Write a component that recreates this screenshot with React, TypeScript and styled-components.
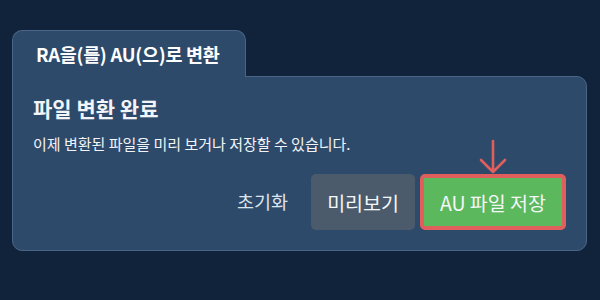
import React from 'react'
import styled, { createGlobalStyle } from 'styled-components'

// ================================================================================================

const GlobalStyle = createGlobalStyle`
  html, body {
    margin: 0;
    padding: 0;
    background: #10233a;
  }

  body {
    font-family: 'Noto Sans CJK KR', 'Noto Sans', sans-serif;
    color: #ffffff;
  }
`

// ================================================================================================

const Page = styled.div`
  width: 600px;
  height: 300px;
  box-sizing: border-box;
  padding: 30px 13px 0 12px;
  display: flex;
  flex-direction: column;
`

const Tab = styled.div`
  align-self: flex-start;
  position: relative;
  z-index: 1;
  box-sizing: border-box;
  width: 234px;
  height: 47px;
  margin-bottom: -1px;
  padding: 0 0 1px 23px;
  display: flex;
  align-items: center;

  background: #2d4a6b;
  border: 1px solid #4b6588;
  border-bottom: none;
  border-radius: 10px 10px 0 0;

  font-size: 18.5px;
  font-weight: 700;
  letter-spacing: -0.3px;
`

const Panel = styled.div`
  box-sizing: border-box;
  height: 175px;
  padding: 15px 20px 20px 20px;
  display: flex;
  flex-direction: column;

  background: #2d4a6b;
  border: 1px solid #4b6588;
  border-radius: 0 10px 10px 10px;
`

const Heading = styled.h2`
  margin: 0;
  font-size: 21px;
  line-height: 32px;
  font-weight: 700;
  color: #f2f4f7;
`

const Description = styled.p`
  margin: 9px 0 0 0;
  font-size: 15px;
  line-height: 22px;
  color: #f2f4f7;
`

const Actions = styled.div`
  margin-top: auto;
  display: flex;
  justify-content: flex-end;
  align-items: center;
  gap: 5px;
`

const TextButton = styled.button`
  margin-right: 18px;
  padding: 0 0 2px 0;
  border: none;
  background: transparent;
  font-family: inherit;
  font-size: 18.5px;
  color: #dde3ea;
`

const Button = styled.button<{ $variant: 'gray' | 'green' }>`
  position: relative;
  box-sizing: border-box;
  height: 56px;
  padding: 0 16px;
  border-radius: 5px;
  border: ${p => (p.$variant === 'green' ? '4px solid #e05f5c' : 'none')};
  background: ${p => (p.$variant === 'green' ? '#5cb85c' : '#4b5b6b')};
  font-family: inherit;
  font-size: 19.5px;
  color: #f4f6f8;
`

const Arrow = styled.svg`
  position: absolute;
  left: 50%;
  top: -39px;
  width: 30px;
  height: 36px;
  transform: translateX(-50%);
`

// ================================================================================================

const App = () => (
  <>
    <GlobalStyle />
    <Page>
      <Tab>RA을(를) AU(으)로 변환</Tab>
      <Panel>
        <Heading>파일 변환 완료</Heading>
        <Description>이제 변환된 파일을 미리 보거나 저장할 수 있습니다.</Description>
        <Actions>
          <TextButton>초기화</TextButton>
          <Button $variant="gray">미리보기</Button>
          <Button $variant="green">
            <Arrow viewBox="0 0 30 36" fill="none">
              <path
                d="M15 2 V33 M3 21 L15 33 L27 21"
                stroke="#e05f5c"
                strokeWidth="2.6"
                strokeLinecap="round"
                strokeLinejoin="round"
              />
            </Arrow>
            AU 파일 저장
          </Button>
        </Actions>
      </Panel>
    </Page>
  </>
)

// ================================================================================================

export default App
